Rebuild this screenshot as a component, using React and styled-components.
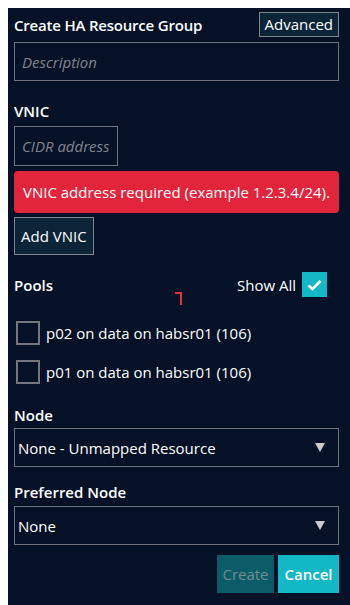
import React from "react";
import styled, { createGlobalStyle } from "styled-components";

const Global = createGlobalStyle`
  html, body { background: #ffffff; }
  body { margin: 8px 0 0 8px; font-family: "Open Sans", "Noto Sans", sans-serif; }
  * { box-sizing: border-box; }
`;

const Panel = styled.div`
  background: #051126;
  min-height: 597px;
  padding: 4px 11px 12px 6px;
  color: #ffffff;
  display: flex;
  flex-direction: column;
  position: relative;
`;

const Header = styled.div`
  display: flex;
  justify-content: space-between;
  align-items: center;
  height: 25px;
`;

const Title = styled.div`
  font-size: 15px;
  font-weight: 600;
  letter-spacing: -0.2px;
`;

const GhostButton = styled.button`
  font-family: inherit;
  font-size: 15px;
  color: #ffffff;
  background: #0b2437;
  border: 1px solid #7d8590;
  padding: 0 ${(p) => p.$px || 5}px;
  height: ${(p) => p.$h || 25}px;
  margin-top: ${(p) => p.$mt || 0}px;
  align-self: flex-start;
  line-height: 1;
`;

const TextInput = styled.div`
  height: ${(p) => p.$h}px;
  width: ${(p) => (p.$w ? p.$w + "px" : "100%")};
  margin-top: ${(p) => p.$mt}px;
  border: 1px solid #6f747c;
  display: flex;
  align-items: center;
  padding-left: 7px;
  font-size: 15px;
  font-style: italic;
  color: #80858d;
`;

const Label = styled.div`
  font-size: 15px;
  font-weight: 600;
  line-height: 20px;
  margin-top: ${(p) => p.$mt}px;
`;

const ErrorBox = styled.div`
  margin-top: 5px;
  height: 42px;
  background: #e3253c;
  border-radius: 4px;
  display: flex;
  align-items: center;
  padding-left: 9px;
  font-size: 15px;
`;

const PoolsRow = styled.div`
  margin-top: 17px;
  height: 25px;
  display: flex;
  justify-content: space-between;
  align-items: center;
  padding-right: 12px;
`;

const ShowAll = styled.div`
  display: flex;
  align-items: center;
  gap: 6px;
  font-size: 15px;
`;

const TealCheck = styled.div`
  width: 25px;
  height: 25px;
  background: #13b7c6;
  display: flex;
  align-items: center;
  justify-content: center;
`;

const Marker = styled.div`
  position: absolute;
  left: 167px;
  top: 284px;
  width: 7px;
  height: 13px;
  border-top: 2px solid #e8313d;
  border-right: 2px solid #e8313d;
`;

const PoolItem = styled.div`
  display: flex;
  align-items: center;
  gap: 6px;
  height: 24px;
  margin-top: ${(p) => p.$mt}px;
  padding-left: 2px;
  font-size: 15px;
`;

const EmptyBox = styled.div`
  width: 24px;
  height: 24px;
  border: 2px solid #74787e;
`;

const Select = styled.div`
  margin-top: ${(p) => p.$mt}px;
  height: 39px;
  border: 1px solid #6f747c;
  display: flex;
  align-items: center;
  justify-content: space-between;
  padding: 0 13px 0 3px;
  font-size: 15px;
`;

const Caret = styled.span`
  width: 0;
  height: 0;
  border-left: 5px solid transparent;
  border-right: 5px solid transparent;
  border-top: 9px solid #c9cbcf;
`;

const Actions = styled.div`
  margin-top: 10px;
  display: flex;
  justify-content: flex-end;
  gap: 4px;
`;

const ActionButton = styled.button`
  font-family: inherit;
  font-size: 15px;
  height: 38px;
  width: ${(p) => p.$w}px;
  border: none;
  padding: 0;
  background: ${(p) => (p.$primary ? "#12b8c4" : "#0b5c68")};
  color: ${(p) => (p.$primary ? "#ffffff" : "#6f8c92")};
  font-weight: ${(p) => (p.$primary ? 600 : 400)};
`;

export default function App() {
  return (
    <>
      <Global />
      <Panel>
        <Header>
          <Title>Create HA Resource Group</Title>
          <GhostButton $px={5}>Advanced</GhostButton>
        </Header>
        <TextInput $h={39} $mt={5}>Description</TextInput>
        <Label $mt={20}>VNIC</Label>
        <TextInput $h={40} $w={104} $mt={5}>CIDR address</TextInput>
        <ErrorBox>VNIC address required (example 1.2.3.4/24).</ErrorBox>
        <GhostButton $h={38} $mt={4} $px={6}>Add VNIC</GhostButton>
        <PoolsRow>
          <Label $mt={0}>Pools</Label>
          <ShowAll>
            Show All
            <TealCheck>
              <svg width="15" height="12" viewBox="0 0 15 12">
                <path d="M1.5 6.5 L5.5 10 L13.5 2" fill="none" stroke="#fff" strokeWidth="2.6" />
              </svg>
            </TealCheck>
          </ShowAll>
        </PoolsRow>
        <Marker />
        <PoolItem $mt={24}>
          <EmptyBox />
          p02 on data on habsr01 (106)
        </PoolItem>
        <PoolItem $mt={15}>
          <EmptyBox />
          p01 on data on habsr01 (106)
        </PoolItem>
        <Label $mt={21}>Node</Label>
        <Select $mt={3}>
          None - Unmapped Resource
          <Caret />
        </Select>
        <Label $mt={15}>Preferred Node</Label>
        <Select $mt={4}>
          None
          <Caret />
        </Select>
        <Actions>
          <ActionButton $w={57}>Create</ActionButton>
          <ActionButton $w={61} $primary>Cancel</ActionButton>
        </Actions>
      </Panel>
    </>
  );
}
